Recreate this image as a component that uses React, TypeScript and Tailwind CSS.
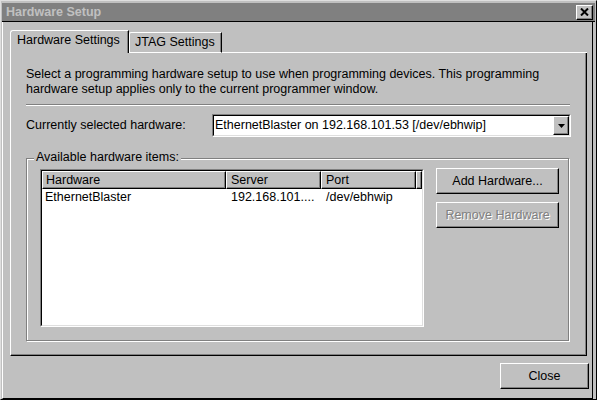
export default function App() {
  const raised =
    "bg-[#c0c0c0] border border-t-white border-l-white border-r-black border-b-black shadow-[inset_-1px_-1px_#808080]";
  return (
    <div className="w-[597px] h-[400px] bg-[#c0c0c0] border border-t-[#dfdfdf] border-l-[#dfdfdf] border-r-black border-b-black flex flex-col text-[12.5px] leading-[15px] text-black font-['Liberation_Sans',Arial,sans-serif]">
      {/* Title bar */}
      <div className="mt-[2px] mx-px h-[19px] shrink-0 bg-[#808080] border-b border-b-black flex items-center justify-between pl-[4px] pr-[2px]">
        <span className="font-bold text-[#c0c0c0]">Hardware Setup</span>
        <div className={`w-[17px] h-[15px] flex items-center justify-center ${raised}`}>
          <svg width="9" height="8" viewBox="0 0 9 8">
            <path d="M1 0.5 L8 7.5 M8 0.5 L1 7.5" stroke="black" strokeWidth="2" />
          </svg>
        </div>
      </div>

      {/* Client area */}
      <div className="flex-1 ml-px mr-[3px] border-l border-l-white border-r border-r-black border-b border-b-black flex flex-col pt-[8px] pl-[7px] pr-[3px]">
        {/* Tabs */}
        <div className="flex items-end h-[23px] mr-[2px] shrink-0">
          <div className="h-[23px] w-[119px] bg-[#c0c0c0] border-l border-t border-r border-l-white border-t-white border-r-black rounded-tl-[3px] shadow-[inset_-1px_0_#808080] pl-[6px] pt-[2px] whitespace-nowrap">
            Hardware Settings
          </div>
          <div className="h-[21px] w-[93px] border-l border-t border-r border-b border-l-white border-t-white border-r-black border-b-white rounded-tl-[2px] shadow-[inset_-1px_0_#808080] pl-[5px] pt-[2px] whitespace-nowrap">
            JTAG Settings
          </div>
          <div className="flex-1 border-b border-b-white" />
        </div>

        {/* Panel */}
        <div className="mr-[2px] h-[303px] shrink-0 border-l border-r border-b border-l-white border-r-black border-b-black shadow-[inset_-1px_-1px_#808080] flex flex-col pt-[14px]">
          <p className="px-[15px] whitespace-nowrap">
            Select a programming hardware setup to use when programming devices. This programming
            <br />
            hardware setup applies only to the current programmer window.
          </p>
          <div className="mt-[7px] ml-[15px] w-[544px] h-[2px] border-t border-b border-t-[#808080] border-b-white" />

          <div className="mt-[8px] h-[23px] flex items-center pl-[15px]">
            <span className="w-[186px] whitespace-nowrap">Currently selected hardware:</span>
            <div className="w-[359px] h-[23px] border border-t-[#808080] border-l-[#808080] border-r-white border-b-white">
              <div className="h-full bg-white border border-t-black border-l-black border-r-[#dfdfdf] border-b-[#dfdfdf] flex items-center">
                <span className="pl-[1px] whitespace-nowrap flex-1">
                  EthernetBlaster on 192.168.101.53 [/dev/ebhwip]
                </span>
                <div className={`w-[16px] h-full flex items-center justify-center ${raised}`}>
                  <svg width="7" height="4" viewBox="0 0 7 4">
                    <path d="M0 0 H7 L3.5 4 Z" fill="black" />
                  </svg>
                </div>
              </div>
            </div>
          </div>

          {/* Group box */}
          <div className="mt-[21px] ml-[15px] w-[543px] h-[183px] relative border border-[#808080] shadow-[inset_1px_1px_#ffffff,1px_1px_#ffffff] pt-[10px] pl-[13px] flex items-start">
            <span className="absolute left-[7px] -top-[9px] px-[2px] bg-[#c0c0c0] whitespace-nowrap">
              Available hardware items:
            </span>

            {/* List */}
            <div className="w-[384px] h-[158px] border border-t-[#808080] border-l-[#808080] border-r-white border-b-white">
              <div className="h-full bg-white border border-t-black border-l-black border-r-[#dfdfdf] border-b-[#dfdfdf] flex flex-col">
                <div className="flex h-[18px]">
                  <div className={`w-[184px] pl-[3px] flex items-center ${raised}`}>Hardware</div>
                  <div className={`w-[95px] pl-[4px] flex items-center ${raised}`}>Server</div>
                  <div className={`w-[95px] pl-[4px] flex items-center ${raised}`}>Port</div>
                  <div className={`flex-1 ${raised}`} />
                </div>
                <div className="flex pt-[1px] whitespace-nowrap">
                  <div className="w-[184px] pl-[3px]">EthernetBlaster</div>
                  <div className="w-[95px] pl-[5px]">192.168.101....</div>
                  <div className="w-[95px] pl-[5px]">/dev/ebhwip</div>
                </div>
              </div>
            </div>

            {/* Buttons */}
            <div className="ml-[12px] -mt-[1px] flex flex-col gap-[8px]">
              <div className={`w-[123px] h-[26px] flex items-center justify-center whitespace-nowrap ${raised}`}>
                Add Hardware...
              </div>
              <div className={`w-[123px] h-[26px] flex items-center justify-center whitespace-nowrap text-[#808080] [text-shadow:1px_1px_0_#ffffff] ${raised}`}>
                Remove Hardware
              </div>
            </div>
          </div>
        </div>

        {/* Footer */}
        <div className="mt-[7px] flex justify-end">
          <div className={`w-[89px] h-[26px] flex items-center justify-center ${raised}`}>Close</div>
        </div>
      </div>
    </div>
  );
}
